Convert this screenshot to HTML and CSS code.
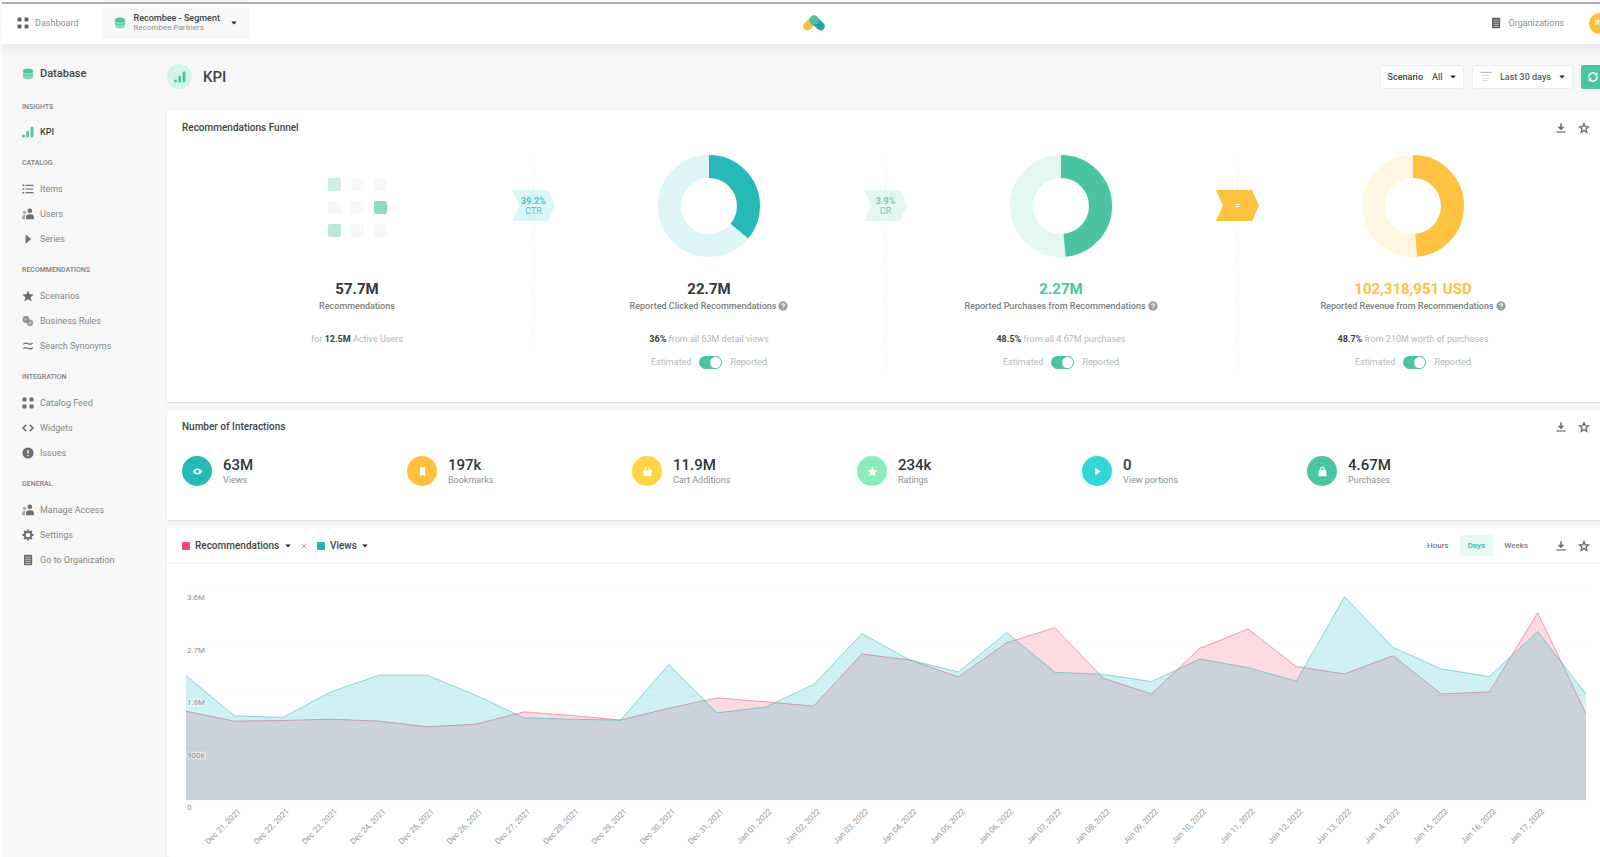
FILE: index.html
```html
<!DOCTYPE html>
<html lang="en">
<head>
<meta charset="utf-8">
<title>KPI - Recombee</title>
<meta name="viewport" content="width=device-width, initial-scale=1">
<link rel="stylesheet" href="styles.css">
</head>
<body>
<svg class="sprite" aria-hidden="true">
  <symbol id="i-grid" viewBox="0 0 12 12"><rect x="0.5" y="0.5" width="4" height="4" rx="1"/><rect x="7.5" y="0.5" width="4" height="4" rx="1"/><rect x="0.5" y="7.5" width="4" height="4" rx="1"/><rect x="7.5" y="7.5" width="4" height="4" rx="1"/></symbol>
  <symbol id="i-db" viewBox="0 0 12 12"><path d="M1 2.5C1 0 11 0 11 2.5V9.5C11 12 1 12 1 9.5Z" fill="#8fdcc1"/><path d="M1 5.6C2.5 7.3 9.500 7.300 11 5.600V7C9.500 8.600 2.500 8.600 1 7Z" fill="#5fcba8"/><path d="M1 2.500C1 .1 11 .1 11 2.500V4C9.500 5.900 2.500 5.900 1 4Z" fill="#49c5a1"/></symbol>
  <symbol id="i-bars" viewBox="0 0 12 12"><circle cx="1.500" cy="10" r="1.500"/><rect x="4.400" y="5" width="2.600" height="6.500" rx="1"/><rect x="8.600" y="0.500" width="2.800" height="11" rx="1"/></symbol>
  <symbol id="i-list" viewBox="0 0 12 12"><path d="M0.500 1.500h1.800v1.600H.5zM.5 5.200h1.800v1.600H.5zM.5 8.900h1.800v1.600H.5zM3.600 1.700h8v1.200h-8zM3.600 5.400h8v1.200h-8zM3.600 9.100h8v1.200h-8z"/></symbol>
  <symbol id="i-users" viewBox="0 0 12 12"><circle cx="7.800" cy="2.800" r="2.300"/><path d="M4 11.200V9.300C4 6.900 5.500 6.300 7.900 6.300S11.800 6.900 11.800 9.300V11.200Z"/><g opacity=".6"><circle cx="2.600" cy="4.400" r="1.600"/><path d="M.3 11.200V9C.3 7.400 1.300 6.900 3.600 6.900 3 7.900 3 9 3 11.200Z"/></g></symbol>
  <symbol id="i-play" viewBox="0 0 12 12"><path d="M3.500 1.600 9.300 6 3.500 10.400Z"/></symbol>
  <symbol id="i-star" viewBox="0 0 12 12"><path d="M6 .4 7.600 4.300 11.700 4.600 8.600 7.300 9.600 11.400 6 9.200 2.400 11.400 3.400 7.300.3 4.600 4.400 4.300Z"/></symbol>
  <symbol id="i-star-o" viewBox="0 0 12 12"><path d="M6 1.700 7.200 4.700 10.500 5 8 7.100 8.800 10.300 6 8.600 3.200 10.300 4 7.100 1.500 5 4.800 4.700Z" fill="none" stroke="currentColor" stroke-width="1.300"/></symbol>
  <symbol id="i-rules" viewBox="0 0 12 12"><circle cx="4" cy="4.400" r="3.300" opacity=".6"/><circle cx="4" cy="4.400" r="2.700" fill="none" stroke="currentColor" stroke-width="1.200" opacity=".5"/><circle cx="8" cy="7.800" r="3.200" opacity=".65"/><circle cx="8" cy="7.800" r="1.200" fill="#f7f7f7" opacity=".5"/></symbol>
  <symbol id="i-approx" viewBox="0 0 12 12"><path d="M1.300 4.400C3 2.200 4.500 3 6 3.700S9 4.800 10.700 2.900M1.300 9C3 6.800 4.500 7.600 6 8.300S9 9.400 10.700 7.500" fill="none" stroke="currentColor" stroke-width="1.200"/></symbol>
  <symbol id="i-code" viewBox="0 0 12 12"><path d="M4.200 2.900 1.100 6 4.200 9.100M7.800 2.900 10.900 6 7.800 9.100" fill="none" stroke="currentColor" stroke-width="1.500"/></symbol>
  <symbol id="i-issue" viewBox="0 0 12 12"><path fill-rule="evenodd" d="M6 .4A5.600 5.600 0 1 1 6 11.600 5.600 5.600 0 0 1 6 .4ZM5.300 3V6.800H6.700V3ZM5.300 7.900V9.200H6.700V7.900Z"/></symbol>
  <symbol id="i-gear" viewBox="0 0 12 12"><circle cx="6" cy="6" r="3.200" fill="none" stroke="currentColor" stroke-width="1.900"/><path d="M6 .4V2.500M6 9.500V11.600M.4 6H2.500M9.500 6H11.600M2.040 2.040 3.500 3.500M8.500 8.500 9.960 9.960M9.960 2.040 8.500 3.500M3.500 8.500 2.040 9.960" stroke="currentColor" stroke-width="1.900"/></symbol>
  <symbol id="i-org" viewBox="0 0 12 12"><rect x="2" y=".7" width="8.200" height="10.600" rx=".8"/><path d="M3.300 3.200H8.900M3.300 5.300H8.900M3.300 7.400H8.900M3.300 9.500H8.900" stroke="#fff" stroke-width=".7" opacity=".7"/></symbol>
  <symbol id="i-caret" viewBox="0 0 6 6"><path d="M.3 1.600H5.700L3 4.600Z"/></symbol>
  <symbol id="i-cal" viewBox="0 0 12 12"><path d="M.5.8H11.500V2H.5Z"/><path d="M2.500 4.500H10M2.500 7H10M2.500 9.500H8" fill="none" stroke="currentColor" stroke-width="1.100" stroke-dasharray="1.200 1.200"/></symbol>
  <symbol id="i-sync" viewBox="0 0 12 12"><path d="M2 6.500A4 4 0 0 1 8.800 3.100M10 5.500A4 4 0 0 1 3.200 8.900" fill="none" stroke="currentColor" stroke-width="1.500"/><path d="M10.300 1.200V4.800H6.900ZM1.700 10.800V7.200H5.100Z"/></symbol>
  <symbol id="i-down" viewBox="0 0 12 12"><path d="M6 1.300V7M3.500 4.700 6 7.200 8.500 4.700" fill="none" stroke="currentColor" stroke-width="1.500"/><path d="M1.300 9.400H10.700V10.600H1.300Z"/></symbol>
  <symbol id="i-help" viewBox="0 0 12 12"><circle cx="6" cy="6" r="5.600"/><path d="M4.400 4.900C4.400 2.700 7.700 2.700 7.700 4.700 7.700 5.900 6.100 5.900 6.100 7.200M6.100 8.100V9.400" fill="none" stroke="#fff" stroke-width="1.300"/></symbol>
  <symbol id="i-eye" viewBox="0 0 12 12"><path fill-rule="evenodd" d="M.8 6C3 1.700 9 1.700 11.200 6 9 10.300 3 10.300.8 6ZM6 4.200A1.800 1.800 0 1 0 6 7.800 1.800 1.800 0 0 0 6 4.200Z"/></symbol>
  <symbol id="i-mark" viewBox="0 0 12 12"><path d="M3.200 1H8.800V11.200L6 9.200 3.200 11.200Z"/></symbol>
  <symbol id="i-basket" viewBox="0 0 12 12"><path d="M.8 4.600H11.200V6H10.700L9.800 11H2.200L1.300 6H.8Z"/><path d="M3.300 5 4.600 1.400M8.700 5 7.400 1.400" stroke="currentColor" stroke-width="1.300"/></symbol>
  <symbol id="i-bag" viewBox="0 0 12 12"><path d="M2.200 4.200H9.800L10.500 11.200H1.500Z"/><path d="M4 5V3.200C4 .5 8 .5 8 3.200V5" fill="none" stroke="currentColor" stroke-width="1.100"/></symbol>
</svg>

<div class="app">
  <header class="topbar">
    <div class="topbar-left">
      <a class="toplink" href="#dashboard"><svg class="icon"><use href="#i-grid"/></svg>Dashboard</a>
      <button class="switcher" type="button" aria-haspopup="listbox">
        <svg class="icon"><use href="#i-db"/></svg>
        <span class="switcher-text"><strong>Recombee - Segment</strong><small>Recombee Partners</small></span>
        <svg class="caret"><use href="#i-caret"/></svg>
      </button>
    </div>
    <a class="logo" href="#home" aria-label="Home">
      <svg viewBox="0 0 66 48"><path d="M13 34 32 16" stroke="#fdbf3c"/><path d="M33 15 53 34" stroke="#27a3a5"/><circle cx="33" cy="15" r="14" fill="#4cc3a0"/></svg>
    </a>
    <div class="topbar-right">
      <a class="toplink" href="#organizations"><svg class="icon"><use href="#i-org"/></svg>Organizations</a>
      <button class="avatar" type="button" aria-label="Account">RT</button>
    </div>
  </header>

  <div class="layout">
    <nav class="sidebar" aria-label="Database">
      <h2 class="side-title"><svg class="icon"><use href="#i-db"/></svg>Database</h2>
      <h3>Insights</h3>
      <a class="active" href="#kpi"><svg class="icon"><use href="#i-bars"/></svg>KPI</a>
      <h3>Catalog</h3>
      <a href="#items"><svg class="icon"><use href="#i-list"/></svg>Items</a>
      <a href="#users"><svg class="icon"><use href="#i-users"/></svg>Users</a>
      <a href="#series"><svg class="icon"><use href="#i-play"/></svg>Series</a>
      <h3>Recommendations</h3>
      <a href="#scenarios"><svg class="icon"><use href="#i-star"/></svg>Scenarios</a>
      <a href="#rules"><svg class="icon"><use href="#i-rules"/></svg>Business Rules</a>
      <a href="#synonyms"><svg class="icon"><use href="#i-approx"/></svg>Search Synonyms</a>
      <h3>Integration</h3>
      <a href="#feed"><svg class="icon"><use href="#i-grid"/></svg>Catalog Feed</a>
      <a href="#widgets"><svg class="icon"><use href="#i-code"/></svg>Widgets</a>
      <a href="#issues"><svg class="icon"><use href="#i-issue"/></svg>Issues</a>
      <h3>General</h3>
      <a href="#access"><svg class="icon"><use href="#i-users"/></svg>Manage Access</a>
      <a href="#settings"><svg class="icon"><use href="#i-gear"/></svg>Settings</a>
      <a href="#organization"><svg class="icon"><use href="#i-org"/></svg>Go to Organization</a>
    </nav>

    <main class="main">
      <div class="page-head">
        <span class="page-icon"><svg class="icon"><use href="#i-bars"/></svg></span>
        <h1>KPI</h1>
        <label class="filter filter-scenario"><span>Scenario</span>
          <select><option>All</option></select><svg class="caret"><use href="#i-caret"/></svg></label>
        <label class="filter filter-date"><svg class="icon"><use href="#i-cal"/></svg>
          <select aria-label="Period"><option>Last 30 days</option></select><svg class="caret"><use href="#i-caret"/></svg></label>
        <button class="refresh" type="button" aria-label="Refresh"><svg class="icon"><use href="#i-sync"/></svg></button>
      </div>

      <section class="card">
        <div class="card-head">
          <h2>Recommendations Funnel</h2>
          <div class="actions">
            <button type="button" aria-label="Download"><svg class="icon"><use href="#i-down"/></svg></button>
            <button type="button" aria-label="Favorite"><svg class="icon"><use href="#i-star-o"/></svg></button>
          </div>
        </div>
        <div class="funnel">
          <div class="step">
            <div class="visual"><div class="dots"><i class="d1"></i><i></i><i></i><i></i><i></i><i class="d3"></i><i class="d2"></i><i></i><i></i></div></div>
            <p class="value">57.7M</p>
            <p class="name">Recommendations</p>
            <p class="note">for <b>12.5M</b> Active Users</p>
            <div class="pill pill-ctr"><svg viewBox="0 0 43 31"><path d="M0 0H36L43 15.500 36 31H0L7 15.500Z"/></svg><span><b>39.2%</b><br>CTR</span></div>
          </div>
          <div class="step">
            <div class="visual"><svg class="donut c-teal" viewBox="0 0 102 102"><circle class="ring" cx="51" cy="51" r="39.500"/><circle class="arc" cx="51" cy="51" r="39.500" pathLength="100" stroke-dasharray="36 100"/></svg></div>
            <p class="value">22.7M</p>
            <p class="name">Reported Clicked Recommendations <svg class="help"><use href="#i-help"/></svg></p>
            <p class="note"><b>36%</b> from all 63M detail views</p>
            <label class="toggle"><span>Estimated</span><input type="checkbox" role="switch" checked><span>Reported</span></label>
            <div class="pill pill-cr"><svg viewBox="0 0 43 31"><path d="M0 0H36L43 15.500 36 31H0L7 15.500Z"/></svg><span><b>3.9%</b><br>CR</span></div>
          </div>
          <div class="step">
            <div class="visual"><svg class="donut c-green" viewBox="0 0 102 102"><circle class="ring" cx="51" cy="51" r="39.500"/><circle class="arc" cx="51" cy="51" r="39.500" pathLength="100" stroke-dasharray="48.500 100"/></svg></div>
            <p class="value v-green">2.27M</p>
            <p class="name">Reported Purchases from Recommendations <svg class="help"><use href="#i-help"/></svg></p>
            <p class="note"><b>48.5%</b> from all 4.67M purchases</p>
            <label class="toggle"><span>Estimated</span><input type="checkbox" role="switch" checked><span>Reported</span></label>
            <div class="pill pill-eq"><svg viewBox="0 0 43 31"><path d="M0 0H36L43 15.500 36 31H0L7 15.500Z"/></svg><span><b>=</b></span></div>
          </div>
          <div class="step">
            <div class="visual"><svg class="donut c-yellow" viewBox="0 0 102 102"><circle class="ring" cx="51" cy="51" r="39.500"/><circle class="arc" cx="51" cy="51" r="39.500" pathLength="100" stroke-dasharray="48.700 100"/></svg></div>
            <p class="value v-yellow">102,318,951 USD</p>
            <p class="name">Reported Revenue from Recommendations <svg class="help"><use href="#i-help"/></svg></p>
            <p class="note"><b>48.7%</b> from 210M worth of purchases</p>
            <label class="toggle"><span>Estimated</span><input type="checkbox" role="switch" checked><span>Reported</span></label>
          </div>
        </div>
      </section>

      <section class="card">
        <div class="card-head">
          <h2>Number of Interactions</h2>
          <div class="actions">
            <button type="button" aria-label="Download"><svg class="icon"><use href="#i-down"/></svg></button>
            <button type="button" aria-label="Favorite"><svg class="icon"><use href="#i-star-o"/></svg></button>
          </div>
        </div>
        <div class="stats">
          <div class="stat"><span class="badge b-views"><svg class="icon"><use href="#i-eye"/></svg></span><div><p class="num">63M</p><p class="cap">Views</p></div></div>
          <div class="stat"><span class="badge b-bookmarks"><svg class="icon"><use href="#i-mark"/></svg></span><div><p class="num">197k</p><p class="cap">Bookmarks</p></div></div>
          <div class="stat"><span class="badge b-cart"><svg class="icon"><use href="#i-basket"/></svg></span><div><p class="num">11.9M</p><p class="cap">Cart Additions</p></div></div>
          <div class="stat"><span class="badge b-ratings"><svg class="icon"><use href="#i-star"/></svg></span><div><p class="num">234k</p><p class="cap">Ratings</p></div></div>
          <div class="stat"><span class="badge b-portions"><svg class="icon"><use href="#i-play"/></svg></span><div><p class="num">0</p><p class="cap">View portions</p></div></div>
          <div class="stat"><span class="badge b-purchases"><svg class="icon"><use href="#i-bag"/></svg></span><div><p class="num">4.67M</p><p class="cap">Purchases</p></div></div>
        </div>
      </section>

      <section class="card card-chart">
        <div class="card-head chart-head">
          <label class="series"><i class="swatch s-pink"></i><select aria-label="First series"><option>Recommendations</option></select><svg class="caret"><use href="#i-caret"/></svg></label>
          <button class="remove" type="button" aria-label="Remove comparison"><svg viewBox="0 0 6 6"><path d="M1 1 5 5M5 1 1 5"/></svg></button>
          <label class="series"><i class="swatch s-teal"></i><select aria-label="Second series"><option>Views</option></select><svg class="caret"><use href="#i-caret"/></svg></label>
          <div class="range">
            <button type="button">Hours</button>
            <button type="button" class="on" aria-pressed="true">Days</button>
            <button type="button">Weeks</button>
          </div>
          <div class="actions">
            <button type="button" aria-label="Download"><svg class="icon"><use href="#i-down"/></svg></button>
            <button type="button" aria-label="Favorite"><svg class="icon"><use href="#i-star-o"/></svg></button>
          </div>
        </div>
        <svg class="chart" id="chart" viewBox="0 0 1400 284" role="img" aria-label="Recommendations and views per day"></svg>
      </section>
    </main>
  </div>
</div>
<script src="chart.js"></script>
</body>
</html>
```

FILE: styles.css
```css
* {
  box-sizing: border-box;
}

html {
  overflow-x: hidden;
}

body {
  margin: 0;
  overflow-x: hidden;
  background: #fff;
  color: #3c4545;
  font-family: Roboto, "Liberation Sans", sans-serif;
  font-size: 9px;
  line-height: 14px;
}

h1, h2, h3, p {
  margin: 0;
}

a {
  color: inherit;
  text-decoration: none;
}

button, select {
  margin: 0;
  padding: 0;
  border: 0;
  background: none;
  color: inherit;
  font: inherit;
  cursor: pointer;
}

select {
  appearance: none;
}

.sprite {
  display: none;
}

.icon {
  flex: none;
  display: block;
  width: 12px;
  height: 12px;
  fill: currentColor;
}

.caret {
  flex: none;
  width: 6px;
  height: 6px;
  fill: #222;
}

/* The workspace is slightly wider than the window and runs off its right edge */
.app {
  display: flex;
  flex-direction: column;
  width: calc(100% + 23px);
  min-height: calc(100vh - 2px);
  margin: 2px 0 0 2px;
  border-top: 2px solid #b4b4b4;
  background: #f7f7f7;
}

/* Top bar */
.topbar {
  display: grid;
  grid-template-columns: 1fr auto 1fr;
  align-items: center;
  height: 40px;
  padding: 0 15px 2px;
  background: #fff;
  box-shadow: 0 2px 16px rgba(0, 0, 0, 0.1);
  z-index: 1;
}

.topbar-left, .topbar-right {
  display: flex;
  align-items: center;
}

.topbar-left {
  gap: 23px;
}

.topbar-right {
  justify-content: flex-end;
  gap: 25px;
}

.toplink {
  display: flex;
  align-items: center;
  gap: 6px;
  color: #8b8f8f;
}

.toplink .icon {
  color: #5b5f5f;
}

.switcher {
  display: flex;
  align-items: center;
  width: 147px;
  height: 32px;
  padding: 0 12px;
  border-radius: 3px;
  background: #f7f7f7;
  text-align: left;
}

.switcher-text {
  flex: 1;
  margin-left: 8px;
  line-height: 10px;
}

.switcher strong, .switcher small {
  display: block;
  white-space: nowrap;
}

.switcher strong {
  font-weight: 500;
}

.switcher small {
  color: #8f9393;
  font-size: 8px;
}

.logo svg {
  display: block;
  width: 22px;
  height: 16px;
  fill: none;
  stroke-width: 25;
  stroke-linecap: round;
}

.avatar {
  width: 21px;
  height: 21px;
  border-radius: 50%;
  background: #fdbf3c;
  color: #fff;
  font-size: 8px;
  font-weight: 500;
}

/* Sidebar */
.layout {
  display: flex;
  flex: 1;
}

.sidebar {
  flex: none;
  width: 165px;
  padding: 17px 0 0 20px;
}

.sidebar a, .side-title {
  display: flex;
  align-items: center;
  gap: 6px;
  height: 25px;
  color: #818686;
}

.sidebar a .icon {
  color: #6a6f6f;
}

.sidebar .side-title {
  color: #3c4545;
  font-size: 11px;
  font-weight: 500;
}

.sidebar h3 {
  height: 32px;
  padding-top: 12px;
  color: #7c8181;
  font-size: 7px;
  font-weight: 500;
  line-height: 14px;
  text-transform: uppercase;
}

.sidebar .active {
  color: #3c4545;
  font-weight: 500;
}

.sidebar .side-title + h3 {
  height: 33px;
  padding-top: 14px;
}

.sidebar .active .icon {
  color: #49c5a1;
}

/* Page header */
.main {
  display: flex;
  flex-direction: column;
  flex: 1;
  min-width: 0;
  padding-right: 20px;
}

.page-head {
  display: flex;
  align-items: center;
  height: 67px;
  padding-bottom: 2px;
}

.page-icon {
  display: grid;
  place-items: center;
  width: 25px;
  height: 25px;
  border-radius: 50%;
  background: #d5f3e8;
  color: #49c5a1;
}

.page-head h1 {
  margin: 0 auto 0 11px;
  font-size: 15px;
  font-weight: 500;
}

.filter {
  display: flex;
  align-items: center;
  gap: 7px;
  height: 24px;
  margin-right: 8px;
  padding: 0 7px;
  border: 1px solid #ececec;
  border-radius: 2px;
  background: #fff;
  font-weight: 500;
  cursor: pointer;
}

.filter select {
  color: #5a6060;
}

.filter-scenario span {
  margin-right: 2px;
}

.filter-date {
  gap: 8px;
}

.filter-date .icon {
  color: #b9bdbd;
}

.refresh {
  display: grid;
  place-items: center;
  width: 24px;
  height: 24px;
  border-radius: 2px;
  background: #49c5a1;
  color: #fff;
}

/* Cards */
.card {
  margin-bottom: 8px;
  border-radius: 2px;
  background: #fff;
  box-shadow: 0 1px 2px rgba(0, 0, 0, 0.12);
}

.card-head {
  display: flex;
  align-items: center;
  height: 34px;
  padding: 0 15px;
}

.card-head h2 {
  font-size: 10px;
  font-weight: 500;
}

.actions {
  display: flex;
  gap: 11px;
  margin-left: auto;
  color: #666b6b;
}

/* Funnel */
.funnel {
  display: grid;
  grid-template-columns: repeat(4, 1fr);
  align-items: start;
  padding: 9px 15px 33px;
}

.step {
  position: relative;
  padding-right: 2px;
  text-align: center;
}

.step:not(:last-child)::after {
  content: "";
  position: absolute;
  top: 3px;
  right: 0;
  bottom: 0;
  border-right: 1px dashed #f0f0f0;
}

.visual {
  display: grid;
  place-items: center;
  height: 103px;
  margin-bottom: 22px;
}

.dots {
  display: grid;
  grid-template-columns: repeat(3, 13px);
  grid-auto-rows: 13px;
  gap: 10px;
  margin-top: 4px;
}

.dots i {
  border-radius: 2px;
  background: #f7f7f7;
}

.dots .d1 {
  background: #cdeee2;
}

.dots .d2 {
  background: #bce8d9;
}

.dots .d3 {
  background: #8edac1;
}

.donut {
  width: 102px;
  height: 102px;
  fill: none;
  stroke-width: 23;
  transform: rotate(-90deg);
}

.c-teal .ring { stroke: #dbf6f5; }
.c-teal .arc { stroke: #27b9b8; }
.c-green .ring { stroke: #e2f7f0; }
.c-green .arc { stroke: #4bc4a1; }
.c-yellow .ring { stroke: #fff6e0; }
.c-yellow .arc { stroke: #fec140; }

.value {
  color: #2f3838;
  font-size: 15px;
  font-weight: 700;
  line-height: 20px;
}

.v-green {
  color: #49c5a1;
}

.v-yellow {
  color: #fdbf3c;
}

.name {
  display: flex;
  justify-content: center;
  align-items: center;
  gap: 2px;
  color: #7b8080;
  font-weight: 500;
}

.help {
  width: 10px;
  height: 10px;
  fill: #989c9c;
}

.note {
  margin-top: 19px;
  color: #b3b6b6;
}

.note b {
  color: #353e3e;
}

.toggle {
  display: flex;
  justify-content: center;
  align-items: center;
  gap: 8px;
  margin-top: 9px;
  color: #b3b6b6;
}

.toggle input {
  appearance: none;
  display: flex;
  justify-content: flex-start;
  width: 23px;
  height: 13px;
  margin: 0;
  padding: 1px;
  border-radius: 7px;
  background: #c9cccc;
  cursor: pointer;
}

.toggle input:checked {
  justify-content: flex-end;
  background: #49c5a1;
}

.toggle input::before {
  content: "";
  width: 11px;
  height: 11px;
  border-radius: 50%;
  background: #fff;
}

.pill {
  position: absolute;
  top: 36px;
  right: -21px;
  z-index: 1;
  display: grid;
  place-items: center;
  width: 43px;
  height: 31px;
  line-height: 10px;
}

.pill > * {
  grid-area: 1 / 1;
}

.pill svg {
  width: 43px;
  height: 31px;
  overflow: visible;
}

.pill-ctr { color: #4fbfc2; fill: #daf5f5; }
.pill-cr { color: #6ccfb2; fill: #e2f7f0; }
.pill-eq { color: #fff; fill: #fec140; }

/* Interactions */
.stats {
  display: grid;
  grid-template-columns: repeat(6, 1fr);
  padding: 12px 73px 34px 15px;
}

.stat {
  display: flex;
  align-items: center;
  gap: 11px;
}

.badge {
  display: grid;
  place-items: center;
  width: 30px;
  height: 30px;
  border-radius: 50%;
  color: #fff;
}

.b-views { background: #27b9b8; }
.b-bookmarks { background: #fdbf3c; }
.b-cart { background: #fed544; }
.b-ratings { background: #89edbb; }
.b-portions { background: #30d6d8; }
.b-purchases { background: #49c5a1; }

.badge .icon {
  width: 11px;
  height: 11px;
}

.num {
  color: #2f3838;
  font-size: 15px;
  font-weight: 500;
  line-height: 18px;
}

.cap {
  color: #8c9090;
  line-height: 12px;
}

/* Chart */
.card-chart {
  flex: 1;
  margin-bottom: 0;
}

.chart-head {
  height: 36px;
  border-bottom: 1px solid #f3f3f3;
}

.series {
  display: flex;
  align-items: center;
  gap: 5px;
  font-size: 10px;
  font-weight: 500;
  cursor: pointer;
}

.swatch {
  width: 8px;
  height: 8px;
  border-radius: 1px;
}

.s-pink { background: #fb446e; }
.s-teal { background: #20b5b4; }

.remove {
  margin: 0 10px;
}

.remove svg {
  display: block;
  width: 6px;
  height: 6px;
  fill: none;
  stroke: #a5a9a9;
}

.range {
  display: flex;
  margin-left: auto;
  color: #7b8080;
  font-size: 8px;
  font-weight: 500;
}

.range button {
  height: 21px;
  padding: 0 8px;
  border-radius: 2px;
}

.range button + button {
  margin-left: 3px;
}

.range .on {
  background: #e8f8f3;
  color: #49c5a1;
  font-weight: 700;
}

.range + .actions {
  margin-left: 19px;
}

.chart {
  display: block;
  width: calc(100% - 38px);
  margin: 0 19px;
}

.chart text {
  fill: #8f9494;
  font-size: 8px;
}

.chart .tick {
  stroke: rgba(255, 255, 255, 0.4);
  stroke-width: 3px;
  stroke-linejoin: round;
  paint-order: stroke;
}

.chart .date {
  text-anchor: end;
}

.chart .grid {
  stroke: rgba(0, 0, 0, 0.02);
}

.chart .line {
  fill: none;
  stroke-width: 1px;
  stroke-opacity: 0.5;
}

.chart .area {
  fill-opacity: 0.2;
}

.chart .pink.line { stroke: #f4416f; }
.chart .pink.area { fill: #f04470; }
.chart .teal.line { stroke: #20b5b4; }
.chart .teal.area { fill: #0cb6c0; }
```

FILE: chart.js
```js
(function () {
  var svg = document.getElementById("chart");
  var ns = "http://www.w3.org/2000/svg";
  var width = 1400, top = 26, base = 236, max = 3600;

  // Daily totals in thousands, Dec 20 to Jan 18
  var recommendations = [1523, 1352, 1363, 1386, 1352, 1254, 1300, 1511, 1449, 1369, 1574, 1751, 1683, 1609, 2503, 2400, 2110, 2697, 2954, 2087, 1819, 2600, 2931, 2287, 2161, 2474, 1819, 1853, 3211, 1477];
  var views = [2133, 1443, 1414, 1853, 2139, 2139, 1797, 1409, 1386, 1369, 2321, 1494, 1591, 1979, 2851, 2400, 2195, 2868, 2190, 2155, 2030, 2417, 2269, 2036, 3484, 2617, 2247, 2115, 2891, 1813];

  function add(name, attrs, text) {
    var el = document.createElementNS(ns, name);
    Object.keys(attrs).forEach(function (key) { el.setAttribute(key, attrs[key]); });
    if (text) { el.textContent = text; }
    svg.appendChild(el);
  }

  function x(i) { return i * width / (views.length - 1); }
  function y(v) { return base - v * (base - top) / max; }

  function drawSeries(data, tone) {
    var path = data.map(function (v, i) { return x(i).toFixed(1) + " " + y(v).toFixed(1); }).join("L");
    add("path", { "class": "area " + tone, d: "M0 " + base + "L" + path + "L" + width + " " + base + "Z" });
    add("path", { "class": "line " + tone, d: "M" + path });
  }

  drawSeries(recommendations, "pink");
  drawSeries(views, "teal");

  ["0", "900k", "1.8M", "2.7M", "3.6M"].forEach(function (label, i) {
    var ly = Math.round(y(i * 900)) + 0.5;
    add("path", { "class": "grid", d: "M0 " + ly + "H" + width });
    add("text", { "class": "tick", x: 1, y: ly + 9 }, label);
  });

  for (var i = 1; i <= 28; i++) {
    var day = i + 20 <= 31 ? "Dec " + (i + 20) + ", 2021" : "Jan " + ("0" + (i - 11)).slice(-2) + ", 2022";
    add("text", { "class": "date", transform: "translate(" + (x(i) + 7).toFixed(1) + " 248) rotate(-45)" }, day);
  }
})();
```
